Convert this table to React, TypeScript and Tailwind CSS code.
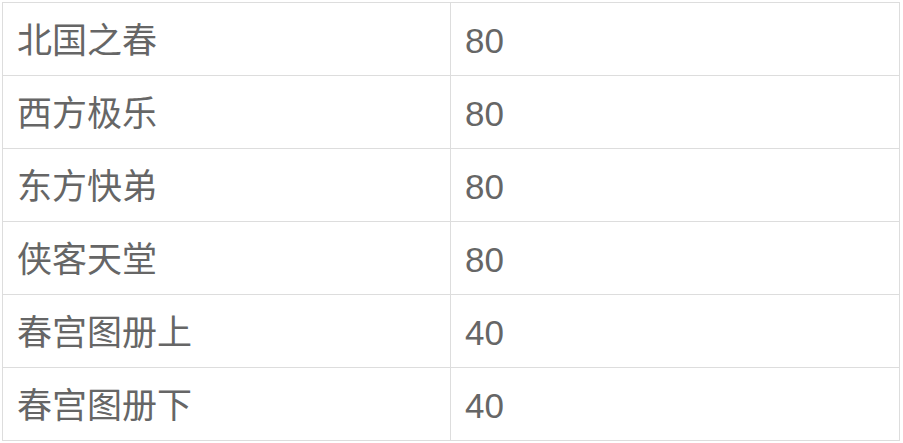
import React from 'react';

const rows = [
  { name: '北国之春', value: '80' },
  { name: '西方极乐', value: '80' },
  { name: '东方快弟', value: '80' },
  { name: '侠客天堂', value: '80' },
  { name: '春宫图册上', value: '40' },
  { name: '春宫图册下', value: '40' },
];

export default function App() {
  return (
    <div className="w-[903px] h-[443px] bg-white pt-[2px] pl-[2px]">
      <div
        className="grid grid-cols-[448px_449px] w-fit border-l border-t border-[#dddddd] text-[35px] text-[#666666]"
        style={{ fontFamily: '"Liberation Sans", "Noto Sans CJK SC", sans-serif' }}
      >
        {rows.map((row) => (
          <React.Fragment key={row.name}>
            <div className="h-[73px] flex items-center pl-[14px] pt-[4px] border-r border-b border-[#dddddd]">
              {row.name}
            </div>
            <div className="h-[73px] flex items-center pl-[14px] pt-[4px] border-r border-b border-[#dddddd]">
              {row.value}
            </div>
          </React.Fragment>
        ))}
      </div>
    </div>
  );
}
